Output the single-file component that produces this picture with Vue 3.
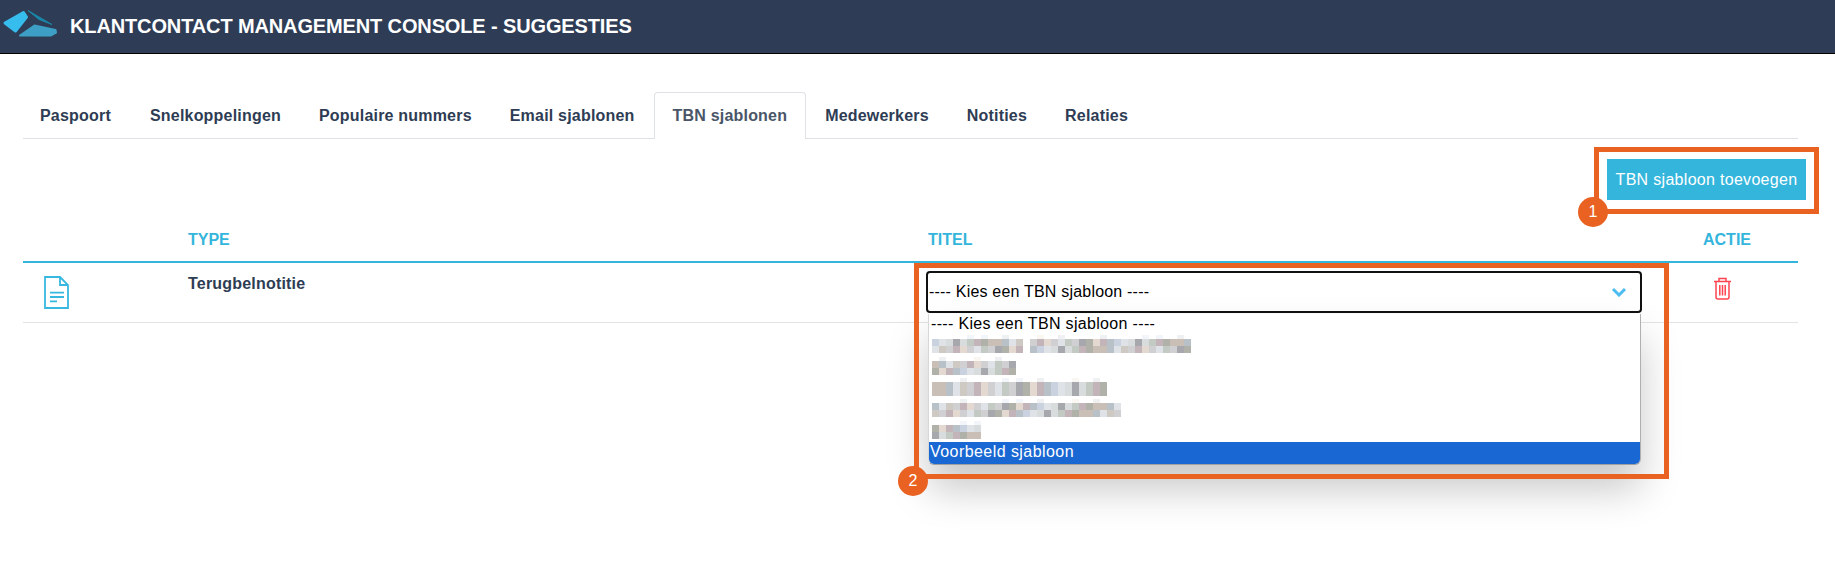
<script setup>
const tabs = ['Paspoort', 'Snelkoppelingen', 'Populaire nummers', 'Email sjablonen', 'TBN sjablonen', 'Medewerkers', 'Notities', 'Relaties']
const activeTab = 'TBN sjablonen'

const palette = ['#b9b3ad', '#a7a8ad', '#c9bfb6', '#b8c0c8', '#e3d9d0', '#c9d2de', '#d8dcdc', '#cfc9c4', '#b0b2a9', '#c2b4b8', '#dfe3e8', '#c3c9c3', '#d0d0d2', '#bcbcbc']
const faint = ['#fff', '#fff', '#fff', '#f2f5fa', '#fff', '#faf6f2', '#fff', '#eef0f2']

// fake censor mosaic, fixed seed so that every render gives the same blocks
let seed = 7
const next = (list) => {
  seed = (seed * 31 + 11) % 101
  return list[seed % list.length]
}

const makeBlocks = (cols, gaps = []) => [
  ...Array.from({ length: cols }, () => next(faint)),
  ...Array.from({ length: cols * 2 }, (_, i) => (gaps.includes(i % cols) ? '#fff' : next(palette)))
]

const blurred = [
  { cols: 37, blocks: makeBlocks(37, [13]) },
  { cols: 12, blocks: makeBlocks(12) },
  { cols: 25, blocks: makeBlocks(25) },
  { cols: 27, blocks: makeBlocks(27) },
  { cols: 7, blocks: makeBlocks(7) }
]
</script>

<template>
  <div class="page">
    <header class="topbar">
      <svg class="logo" width="60" height="53" viewBox="0 0 60 53">
        <path d="M5 23 L23.5 12.5 L26.5 17 L15.5 31 Z" fill="#36bdee" stroke="#36bdee" stroke-width="3" stroke-linejoin="round" />
        <path d="M28 10.5 L52 24.5 L39 19.5 Z" fill="#1a86a8" stroke="#1a86a8" stroke-linejoin="round" />
        <path d="M20 35.5 L34.5 25.5 L55.5 30 L56 32.5 L50.5 35.5 Z" fill="#3e9fc6" stroke="#3e9fc6" stroke-width="2" stroke-linejoin="round" />
      </svg>
      <h1 class="topbar__title">KLANTCONTACT MANAGEMENT CONSOLE - SUGGESTIES</h1>
    </header>

    <main class="content">
      <nav class="tabs">
        <a v-for="tab in tabs" :key="tab" :class="['tabs__item', { 'tabs__item--active': tab === activeTab }]">{{ tab }}</a>
      </nav>

      <div class="toolbar">
        <button class="add-btn">TBN sjabloon toevoegen</button>
      </div>

      <div class="table">
        <div class="table__row table__row--head">
          <div></div>
          <div>TYPE</div>
          <div class="cell-title">TITEL</div>
          <div class="cell-action">ACTIE</div>
        </div>
        <div class="table__row table__row--body">
          <div class="cell-icon">
            <svg width="27" height="35" viewBox="0 0 27 35" fill="none" stroke="#38b8e0" stroke-width="1.8">
              <path d="M2 2 H17 L25 10 V33 H2 Z" />
              <path d="M17 2 V10 H25" />
              <path d="M7 17.7 H21 M7 22 H21 M7 26.3 H14" />
            </svg>
          </div>
          <div class="cell-type">Terugbelnotitie</div>
          <div class="cell-select">
            <div class="select">
              <span>---- Kies een TBN sjabloon ----</span>
              <svg width="16" height="10" viewBox="0 0 16 10" fill="none" stroke="#4dbcf0" stroke-width="3">
                <path d="M2 2 L8 8 L14 2" />
              </svg>
            </div>
            <ul class="popup">
              <li class="popup__option popup__option--first">---- Kies een TBN sjabloon ----</li>
              <li v-for="(row, i) in blurred" :key="i" class="popup__option">
                <div class="mosaic" :style="{ gridTemplateColumns: `repeat(${row.cols}, 7px)` }">
                  <i v-for="(color, j) in row.blocks" :key="j" :style="{ background: color }"></i>
                </div>
              </li>
              <li class="popup__option popup__option--selected">Voorbeeld sjabloon</li>
            </ul>
          </div>
          <div class="cell-trash">
            <svg width="19" height="23" viewBox="0 0 19 23" fill="none" stroke="#ff4450" stroke-width="1.5">
              <path d="M1 4.5 H18 M6 4.5 V1.5 H13 V4.5" />
              <path d="M3 4.5 V20 Q3 22 5 22 H14 Q16 22 16 20 V4.5" />
              <path d="M6.8 8 V18.5 M9.5 8 V18.5 M12.2 8 V18.5" />
            </svg>
          </div>
        </div>
      </div>
    </main>

    <!-- annotations drawn on top of the screenshot -->
    <div class="mark mark--one"></div>
    <div class="mark mark--two"></div>
    <div class="badge badge--one">1</div>
    <div class="badge badge--two">2</div>
  </div>
</template>

<style scoped>
.page {
  position: relative;
  height: 564px;
  overflow: hidden;
  background: #fff;
  font-family: "Liberation Sans", Arial, sans-serif;
  color: #2e3c54;
}

.topbar {
  display: flex;
  align-items: center;
  height: 53px;
  background: #2e3d55;
  border-bottom: 1px solid #000;
}

.logo {
  flex: none;
  margin-right: 10px;
}

.topbar__title {
  margin: 0;
  font-size: 20px;
  font-weight: 700;
  letter-spacing: -0.13px;
  color: #fff;
}

.content {
  padding: 38px 37px 0 23px;
}

.tabs {
  display: flex;
  gap: 4px;
  height: 46px;
  border-bottom: 1px solid #dee2e6;
}

.tabs__item {
  box-sizing: border-box;
  height: 46px;
  padding: 0 16px;
  border: 1px solid transparent;
  border-bottom: 0;
  font-size: 16px;
  font-weight: 700;
  letter-spacing: 0.2px;
  line-height: 46px;
}

.tabs__item:first-child {
  margin-right: 1px;
}

.tabs__item--active {
  height: 47px;
  margin: 0 -2px;
  padding: 0 18px;
  background: #fff;
  border-color: #dee2e6;
  border-radius: 4px 4px 0 0;
  color: #4a5568;
}

.toolbar {
  display: flex;
  justify-content: flex-end;
  padding-top: 20px;
  margin-right: -8px;
}

.add-btn {
  width: 199px;
  height: 41px;
  padding: 0;
  border: 0;
  background: #34b5dc;
  color: #fff;
  font-family: inherit;
  font-size: 16px;
  letter-spacing: 0.3px;
}

.table__row {
  display: grid;
  grid-template-columns: 165px 738px 734px 1fr;
}

.table__row--head {
  height: 63px;
  padding-top: 31px;
  box-sizing: border-box;
  border-bottom: 2px solid #34b5dc;
  color: #34b5dc;
  font-size: 16px;
  font-weight: 700;
}

.table__row--body {
  height: 60px;
  box-sizing: border-box;
  border-bottom: 1px solid #e3e3e3;
}

.cell-title {
  padding-left: 2px;
}

.cell-action {
  padding-left: 43px;
}

.cell-icon {
  padding: 12px 0 0 20px;
}

.cell-type {
  padding-top: 12px;
  font-size: 16px;
  font-weight: 700;
  letter-spacing: 0.2px;
}

.cell-select {
  position: relative;
  padding-top: 8px;
}

.select {
  display: flex;
  align-items: center;
  justify-content: space-between;
  box-sizing: border-box;
  width: 716px;
  height: 42px;
  padding: 0 13px 0 1px;
  background: #fff;
  border: 2px solid #111;
  border-radius: 4px;
  color: #000;
  font-size: 16px;
  letter-spacing: 0.2px;
}

.popup {
  position: absolute;
  top: 51px;
  left: 2px;
  width: 713px;
  box-sizing: border-box;
  margin: 0;
  padding: 0;
  list-style: none;
  background: #fff;
  border-right: 1px solid #b0b0b0;
  border-bottom: 1px solid #a0a0a0;
  border-left: 1px solid #d8d8d8;
  border-radius: 0 0 6px 6px;
  box-shadow: 0 24px 40px rgba(0, 0, 0, 0.22);
}

.popup__option {
  height: 21.33px;
  padding-left: 1px;
  color: #000;
  font-size: 16px;
  line-height: 19px;
}

.popup__option--first {
  padding-left: 2px;
  letter-spacing: 0.33px;
}

.popup__option--selected {
  height: 22px;
  background: #1967d2;
  border-radius: 0 0 5px 5px;
  color: #fff;
  letter-spacing: 0.44px;
}

.mosaic {
  display: grid;
  grid-template-rows: 4px 7px 7px;
  padding-left: 2px;
}

.mosaic i {
  display: block;
}

.cell-trash {
  padding: 14px 0 0 53px;
}

.mark {
  position: absolute;
  box-sizing: border-box;
  border: 5px solid #e96222;
}

.mark--one {
  top: 147px;
  left: 1594px;
  width: 225px;
  height: 67px;
}

.mark--two {
  top: 263px;
  left: 914px;
  width: 755px;
  height: 216px;
}

.badge {
  position: absolute;
  width: 30px;
  height: 30px;
  background: #e96222;
  border-radius: 50%;
  color: #fff;
  font-size: 16px;
  line-height: 30px;
  text-align: center;
}

.badge--one {
  top: 197px;
  left: 1578px;
}

.badge--two {
  top: 466px;
  left: 898px;
}
</style>

<style>
html,
body {
  margin: 0;
  overflow: hidden;
}
</style>
